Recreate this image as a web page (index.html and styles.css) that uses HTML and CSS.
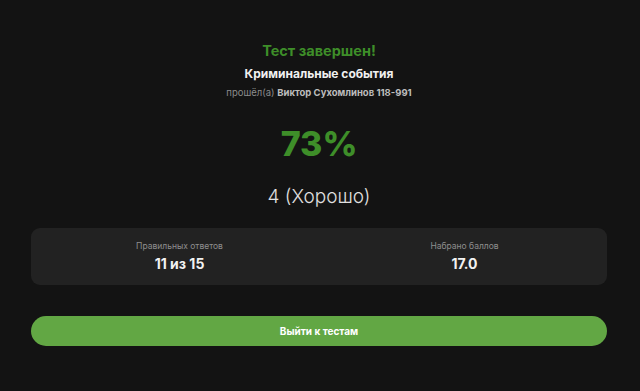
FILE: index.html
```html
<!DOCTYPE html>
<html>
  <head>
    <title>Результат теста</title>
    <link rel="stylesheet" href="styles.css">
  </head>
  <body>
    <div class="result">
      <h1 class="result-title">Тест завершен!</h1>
      <div class="test-name">Криминальные события</div>
      <div class="passed-by">прошёл(а) <b>Виктор Сухомлинов 118-991</b></div>

      <div class="percent">73%</div>
      <div class="grade">4 (Хорошо)</div>

      <div class="stats">
        <div class="stat">
          <div class="stat-label">Правильных ответов</div>
          <div class="stat-value">11 из 15</div>
        </div>
        <div class="stat">
          <div class="stat-label">Набрано баллов</div>
          <div class="stat-value">17.0</div>
        </div>
      </div>

      <button class="exit-button">Выйти к тестам</button>
    </div>
  </body>
</html>
```

FILE: styles.css
```css
body {
  margin: 0;
  background-color: #131313;
  color: #eee;
  font-family: Inter, "Noto Sans", sans-serif;
}
.result {
  padding: 42px 33px 0 31px;
  text-align: center;
}
.result-title {
  margin: 0;
  font-size: 14.5px;
  line-height: 18px;
  font-weight: 700;
  color: #3e8e29;
}
.test-name {
  margin-top: 6px;
  font-size: 12px;
  line-height: 16px;
  font-weight: 700;
  color: #f0f0f0;
}
.passed-by {
  margin-top: 4px;
  font-size: 9.5px;
  line-height: 14px;
  color: #8c8c8c;
}
.passed-by b {
  color: #bdbdbd;
  font-weight: 700;
}

.percent {
  margin-top: 22px;
  font-size: 34px;
  line-height: 44px;
  font-weight: 800;
  color: #3e8e29;
}
.grade {
  margin-top: 19px;
  font-size: 19px;
  line-height: 24px;
  font-weight: 300;
  color: #e0e0e0;
}

.stats {
  display: grid;
  grid-template-columns: 1fr 1fr;
  margin-top: 19px;
  padding: 12px 0 12px 6px;
  background-color: #222222;
  border-radius: 9px;
}
.stat-label {
  font-size: 8.5px;
  line-height: 12px;
  color: #8e8e8e;
}
.stat-value {
  margin-top: 2px;
  font-size: 14px;
  line-height: 19px;
  font-weight: 700;
  color: #f2f2f2;
}

.exit-button {
  display: block;
  width: 100%;
  height: 30px;
  margin-top: 31px;
  border: none;
  border-radius: 15px;
  background-color: #62a744;
  color: #fff;
  font-family: inherit;
  font-size: 10px;
  font-weight: 700;
  cursor: pointer;
}
```
